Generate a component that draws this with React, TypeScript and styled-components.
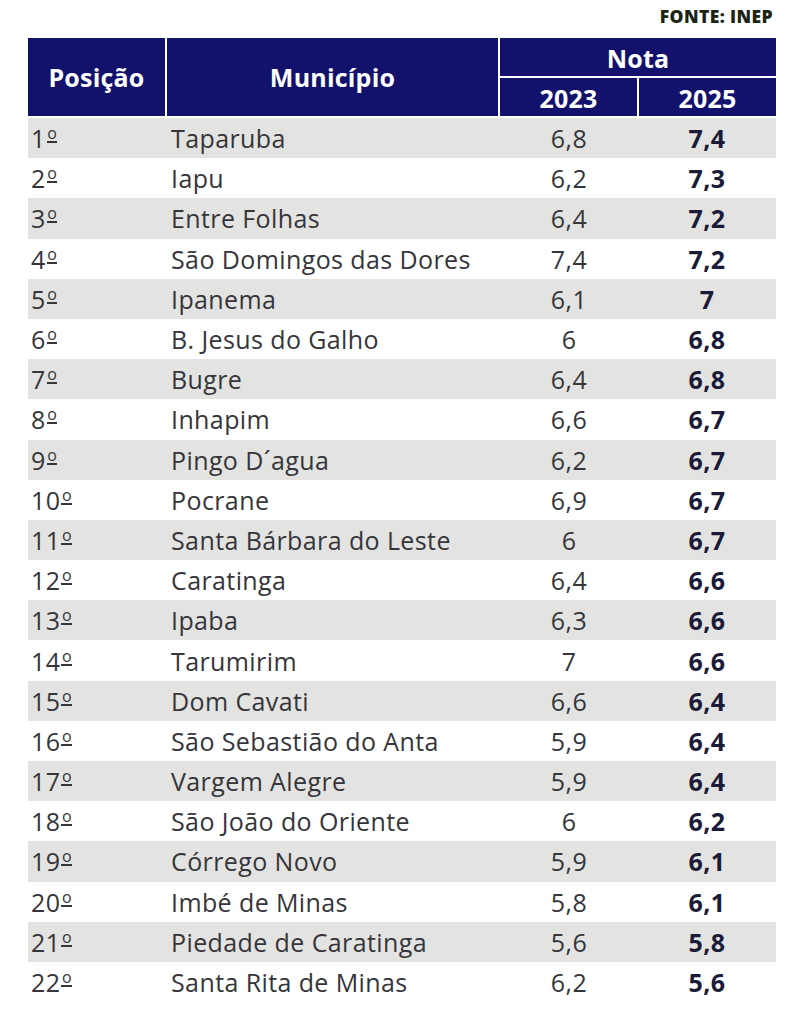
import React from "react";
import styled, { createGlobalStyle } from "styled-components";

const GlobalStyle = createGlobalStyle`
  html, body {
    margin: 0;
    padding: 0;
    background: #ffffff;
  }
  body {
    font-family: "Open Sans", Lato, sans-serif;
  }
`;

const rows: [number, string, string, string][] = [
  [1, "Taparuba", "6,8", "7,4"],
  [2, "Iapu", "6,2", "7,3"],
  [3, "Entre Folhas", "6,4", "7,2"],
  [4, "São Domingos das Dores", "7,4", "7,2"],
  [5, "Ipanema", "6,1", "7"],
  [6, "B. Jesus do Galho", "6", "6,8"],
  [7, "Bugre", "6,4", "6,8"],
  [8, "Inhapim", "6,6", "6,7"],
  [9, "Pingo D´agua", "6,2", "6,7"],
  [10, "Pocrane", "6,9", "6,7"],
  [11, "Santa Bárbara do Leste", "6", "6,7"],
  [12, "Caratinga", "6,4", "6,6"],
  [13, "Ipaba", "6,3", "6,6"],
  [14, "Tarumirim", "7", "6,6"],
  [15, "Dom Cavati", "6,6", "6,4"],
  [16, "São Sebastião do Anta", "5,9", "6,4"],
  [17, "Vargem Alegre", "5,9", "6,4"],
  [18, "São João do Oriente", "6", "6,2"],
  [19, "Córrego Novo", "5,9", "6,1"],
  [20, "Imbé de Minas", "5,8", "6,1"],
  [21, "Piedade de Caratinga", "5,6", "5,8"],
  [22, "Santa Rita de Minas", "6,2", "5,6"],
];

const App = () => {
  return (
    <>
      <GlobalStyle />
      <Page>
        <Source>FONTE: INEP</Source>
        <Header>
          <HeadCell>Posição</HeadCell>
          <HeadCell>Município</HeadCell>
          <NotaGroup>
            <HeadCell $small>Nota</HeadCell>
            <YearRow>
              <HeadCell $small>2023</HeadCell>
              <HeadCell $small>2025</HeadCell>
            </YearRow>
          </NotaGroup>
        </Header>
        {rows.map(([pos, city, a, b], i) => (
          <Row key={pos} $shaded={i % 2 === 0}>
            <Pos>
              {pos}
              <Ordinal aria-label="º">o</Ordinal>
            </Pos>
            <City>{city}</City>
            <Score>{a}</Score>
            <Score $bold>{b}</Score>
          </Row>
        ))}
      </Page>
    </>
  );
};

export default App;

const Page = styled.div`
  width: 748px;
  padding: 4px 0 0 28px;
  display: flex;
  flex-direction: column;
`;

const Source = styled.div`
  align-self: flex-end;
  margin-right: 3px;
  height: 32px;
  font-size: 17.5px;
  font-weight: 800;
  color: #1c2414;
  letter-spacing: 0.4px;
`;

const Header = styled.div`
  display: grid;
  grid-template-columns: 137px 331px 276px;
  column-gap: 2px;
  height: 78px;
  margin-top: 2px;
  border-bottom: 2px solid #ffffff;
`;

const NotaGroup = styled.div`
  display: grid;
  grid-template-rows: 38px 38px;
  row-gap: 2px;
`;

const YearRow = styled.div`
  display: grid;
  grid-template-columns: 137px 137px;
  column-gap: 2px;
`;

const HeadCell = styled.div<{ $small?: boolean }>`
  background: #12126c;
  color: #ffffff;
  font-weight: 700;
  font-size: 25px;
  letter-spacing: 0.2px;
  display: flex;
  align-items: center;
  justify-content: center;
  padding-top: ${(p) => (p.$small ? "2px" : "0")};
`;

const Row = styled.div<{ $shaded: boolean }>`
  display: grid;
  grid-template-columns: 139px 333px 138px 138px;
  height: 40.2px;
  align-items: center;
  background: ${(p) => (p.$shaded ? "#e3e3e1" : "#ffffff")};
  color: #35353a;
  font-size: 25px;
  letter-spacing: 0.4px;
`;

const Pos = styled.div`
  padding-left: 3px;
`;

const Ordinal = styled.span`
  display: inline-block;
  font-size: 16px;
  line-height: 16px;
  vertical-align: 9px;
  margin-left: 1px;
  padding: 0 0.5px;
  border-bottom: 2px solid currentColor;
  letter-spacing: 0;
`;

const City = styled.div`
  padding-left: 4px;
  white-space: nowrap;
`;

const Score = styled.div<{ $bold?: boolean }>`
  text-align: center;
  font-weight: ${(p) => (p.$bold ? 700 : 400)};
  color: ${(p) => (p.$bold ? "#1b1b38" : "#35353a")};
`;
